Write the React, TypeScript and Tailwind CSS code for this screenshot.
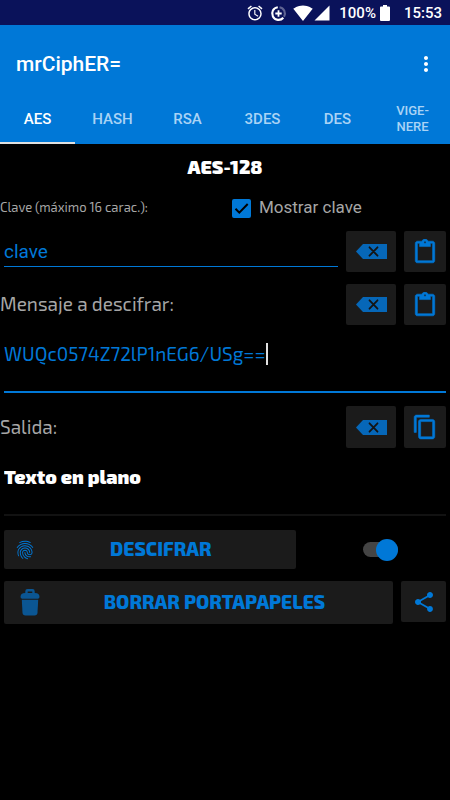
import { useState } from 'react';
import type { ReactNode } from 'react';
import {
  MdAlarm,
  MdContentCopy,
  MdContentPaste,
  MdFingerprint,
  MdMoreVert,
  MdShare,
  MdSignalCellular4Bar,
  MdSignalWifi4Bar
} from 'react-icons/md';

const tabs = [
  { id: 'aes', label: 'AES' },
  { id: 'hash', label: 'HASH' },
  { id: 'rsa', label: 'RSA' },
  { id: '3des', label: '3DES' },
  { id: 'des', label: 'DES' },
  { id: 'vigenere', label: 'VIGE-NERE', small: true }
];

const DataSaverIcon = () => (
  <svg viewBox="0 0 24 24" className="w-[17px] h-[17px]" fill="none" stroke="currentColor" aria-hidden="true">
    <path d="M13.500 3.100A9 9 0 0 1 19.800 16.500" strokeWidth="3" strokeOpacity="0.35" />
    <path d="M11 3.100A9 9 0 1 0 18.800 18" strokeWidth="3" />
    <path d="M12 7.500v9M7.500 12h9" strokeWidth="2.500" />
  </svg>
);

const BatteryIcon = () => (
  <svg viewBox="0 0 10 16" className="w-2.5 h-4" fill="currentColor" aria-hidden="true">
    <path d="M3 0h4v1.500h2q1 0 1 1V15q0 1-1 1H1q-1 0-1-1V2.500q0-1 1-1h2z" />
  </svg>
);

const ClearIcon = () => (
  <svg viewBox="0 0 31 15" className="w-[31px] h-[15px]" aria-hidden="true">
    <path d="M0 7.500 7 0h24v15H7z" fill="#0667b8" />
    <path d="m13.500 3.300 8 8.400m0-8.400-8 8.400" stroke="#141414" strokeWidth="1.800" strokeLinecap="round" />
  </svg>
);

const TrashIcon = () => (
  <svg viewBox="0 0 20 27" className="w-5 h-[27px]" aria-hidden="true">
    <path d="M6.500 4.500V2.200q0-1 1-1h5q1 0 1 1v2.300" fill="none" stroke="#0b5693" strokeWidth="2.400" />
    <path d="M.500 8q0-4 4.500-4h10q4.500 0 4.500 4 0 1.800-1.800 1.800H2.300Q.500 9.800.500 8z" fill="#0b5693" />
    <path d="M1.800 10.800h16.400l-.7 13q-.2 2.700-3 2.700h-9q-2.800 0-3-2.700z" fill="#0b5693" />
  </svg>
);

interface ToolButtonProps {
  label: string;
  className: string;
  onClick?: () => void;
  children: ReactNode;
}

const ToolButton = ({ label, className, onClick, children }: ToolButtonProps) => (
  <button
    type="button"
    aria-label={label}
    onClick={onClick}
    className={`flex shrink-0 items-center justify-center rounded-xs bg-[#1b1b1b] text-[#0078d7] ${className}`}
  >
    {children}
  </button>
);

const StatusBar = () => (
  <div className="flex h-[25px] items-center justify-end bg-[#0a125a] pt-px pr-2 text-[15px] font-medium text-white">
    <MdAlarm className="w-[18px] h-[18px] mr-1.5" />
    <DataSaverIcon />
    <MdSignalWifi4Bar className="w-5 h-5 ml-1.5" />
    <MdSignalCellular4Bar className="w-[18px] h-[18px]" />
    <span className="ml-2 mr-1">100%</span>
    <BatteryIcon />
    <span className="ml-3.5">15:53</span>
  </div>
);

const App = () => {
  const [activeTab, setActiveTab] = useState('aes');
  const [showKey, setShowKey] = useState(true);
  const [key, setKey] = useState('clave');
  const [message, setMessage] = useState('WUQc0574Z72lP1nEG6/USg==');
  const [output, setOutput] = useState('Texto en plano');
  const [decrypt, setDecrypt] = useState(true);

  return (
    <div className="min-h-screen bg-black font-['Roboto',sans-serif] text-[#a6a6a6]">
      <StatusBar />

      {/* App bar and tabs */}
      <header className="bg-[#0078d7] text-white">
        <div className="flex h-[70px] items-center justify-between pt-2 pl-4 pr-3">
          <h1 className="text-[21px] leading-7 font-medium">mrCiphER=</h1>
          <button type="button" aria-label="Más opciones">
            <MdMoreVert className="w-6 h-6" />
          </button>
        </div>
        <div role="tablist" className="grid h-[49px] grid-cols-6">
          {tabs.map((tab) => (
            <button
              key={tab.id}
              type="button"
              role="tab"
              aria-selected={activeTab === tab.id}
              onClick={() => setActiveTab(tab.id)}
              className={`border-b-2 px-4 font-medium ${
                tab.small ? 'text-[13px] leading-4' : 'text-[15px] leading-5'
              } ${
                activeTab === tab.id ? 'border-[#e0e0e0] text-white' : 'border-transparent text-[#a9d3f5]'
              }`}
            >
              {tab.label}
            </button>
          ))}
        </div>
      </header>

      <main className="font-['Exo_2','Open_Sans',sans-serif]">
        <h2 className="pt-[11px] text-center text-[19px] leading-6 font-black text-white">AES-128</h2>

        {/* Key */}
        <div className="flex h-[52px] items-center pt-1.5">
          <label htmlFor="key" className="w-[232px] text-[13px]">
            Clave (máximo 16 carac.):
          </label>
          <label className="flex items-center gap-2 font-['Roboto',sans-serif] text-[17px]">
            <span className="grid place-items-center">
              <input
                type="checkbox"
                checked={showKey}
                onChange={(e) => setShowKey(e.target.checked)}
                className="col-start-1 row-start-1 w-[19px] h-[19px] appearance-none rounded-xs border-2 border-[#0078d7] checked:bg-[#0078d7]"
              />
              {showKey && (
                <svg viewBox="0 0 19 19" className="pointer-events-none col-start-1 row-start-1 w-[19px] h-[19px]" fill="none">
                  <path d="m3.500 9.800 3.800 3.800 8.400-8.600" stroke="#000" strokeWidth="2" />
                </svg>
              )}
            </span>
            Mostrar clave
          </label>
        </div>

        <div className="flex items-center gap-2 px-1">
          <input
            id="key"
            type={showKey ? 'text' : 'password'}
            value={key}
            onChange={(e) => setKey(e.target.value)}
            className="h-[30px] min-w-0 flex-1 border-b border-[#0078d7] bg-transparent font-['Roboto',sans-serif] text-[19px] text-[#0078d7] outline-none"
          />
          <ToolButton label="Borrar clave" className="w-[50px] h-[41px]" onClick={() => setKey('')}>
            <ClearIcon />
          </ToolButton>
          <ToolButton label="Pegar clave" className="w-[42px] h-[41px]">
            <MdContentPaste className="w-[26px] h-[26px] [&>path:last-child]:[stroke-width:0.5]" />
          </ToolButton>
        </div>

        {/* Message */}
        <div className="flex items-center gap-2 pr-1 pt-3">
          <label htmlFor="message" className="flex-1 text-[19px]">
            Mensaje a descifrar:
          </label>
          <ToolButton label="Borrar mensaje" className="w-[50px] h-[41px]" onClick={() => setMessage('')}>
            <ClearIcon />
          </ToolButton>
          <ToolButton label="Pegar mensaje" className="w-[42px] h-[41px]">
            <MdContentPaste className="w-[26px] h-[26px] [&>path:last-child]:[stroke-width:0.5]" />
          </ToolButton>
        </div>
        <div className="mx-1 flex h-[68px] items-center border-b-2 border-[#0078d7] pb-2">
          <input
            id="message"
            value={message}
            onChange={(e) => setMessage(e.target.value)}
            className="field-sizing-content max-w-full bg-transparent text-[19px] text-[#0078d7] caret-transparent outline-none"
          />
          <span className="h-[22px] w-0.5 bg-[#e0e0e0]" />
        </div>

        {/* Output */}
        <div className="flex items-center gap-2 pr-1 pt-[13px]">
          <label htmlFor="output" className="flex-1 text-[19px]">
            Salida:
          </label>
          <ToolButton label="Borrar salida" className="w-[50px] h-[42px]" onClick={() => setOutput('')}>
            <ClearIcon />
          </ToolButton>
          <ToolButton label="Copiar salida" className="w-[42px] h-[42px]">
            <MdContentCopy className="w-[26px] h-[26px] [&>path:last-child]:[stroke-width:0.5]" />
          </ToolButton>
        </div>
        <div className="mx-1 flex h-[68px] items-center border-b-2 border-[#121212] pb-2">
          <input
            id="output"
            readOnly
            value={output}
            className="w-full bg-transparent text-[19px] font-black text-white outline-none"
          />
        </div>

        {/* Actions */}
        <div className="flex items-center px-1 pt-3.5">
          <button
            type="button"
            className="flex h-[39px] w-[66%] items-center rounded-xs bg-[#1b1b1b] px-2.5 text-[19px] font-extrabold text-[#0078d7]"
          >
            <MdFingerprint className="w-[22px] h-[22px]" />
            <span className="flex-1 text-center">DESCIFRAR</span>
          </button>
          <div className="flex flex-1 justify-center pl-5">
            <label className="relative flex h-[22px] w-[35px] items-center">
              <input
                type="checkbox"
                role="switch"
                aria-label="Descifrar"
                checked={decrypt}
                onChange={(e) => setDecrypt(e.target.checked)}
                className="h-[15px] w-full appearance-none rounded-full bg-[#444]"
              />
              <span
                className={`pointer-events-none absolute top-0 h-[22px] w-[22px] rounded-full ${
                  decrypt ? 'right-0 bg-[#0078d7]' : 'left-0 bg-[#bdbdbd]'
                }`}
              />
            </label>
          </div>
        </div>

        <div className="flex items-start gap-2 px-1 pt-3">
          <button
            type="button"
            className="flex h-[43px] flex-1 items-center rounded-xs bg-[#1b1b1b] pl-4 pr-1 text-[19px] font-extrabold text-[#0078d7]"
          >
            <TrashIcon />
            <span className="flex-1 text-center">BORRAR PORTAPAPELES</span>
          </button>
          <ToolButton label="Compartir" className="w-[45px] h-[41px]">
            <MdShare className="w-6 h-6" />
          </ToolButton>
        </div>
      </main>
    </div>
  );
};

export default App;
